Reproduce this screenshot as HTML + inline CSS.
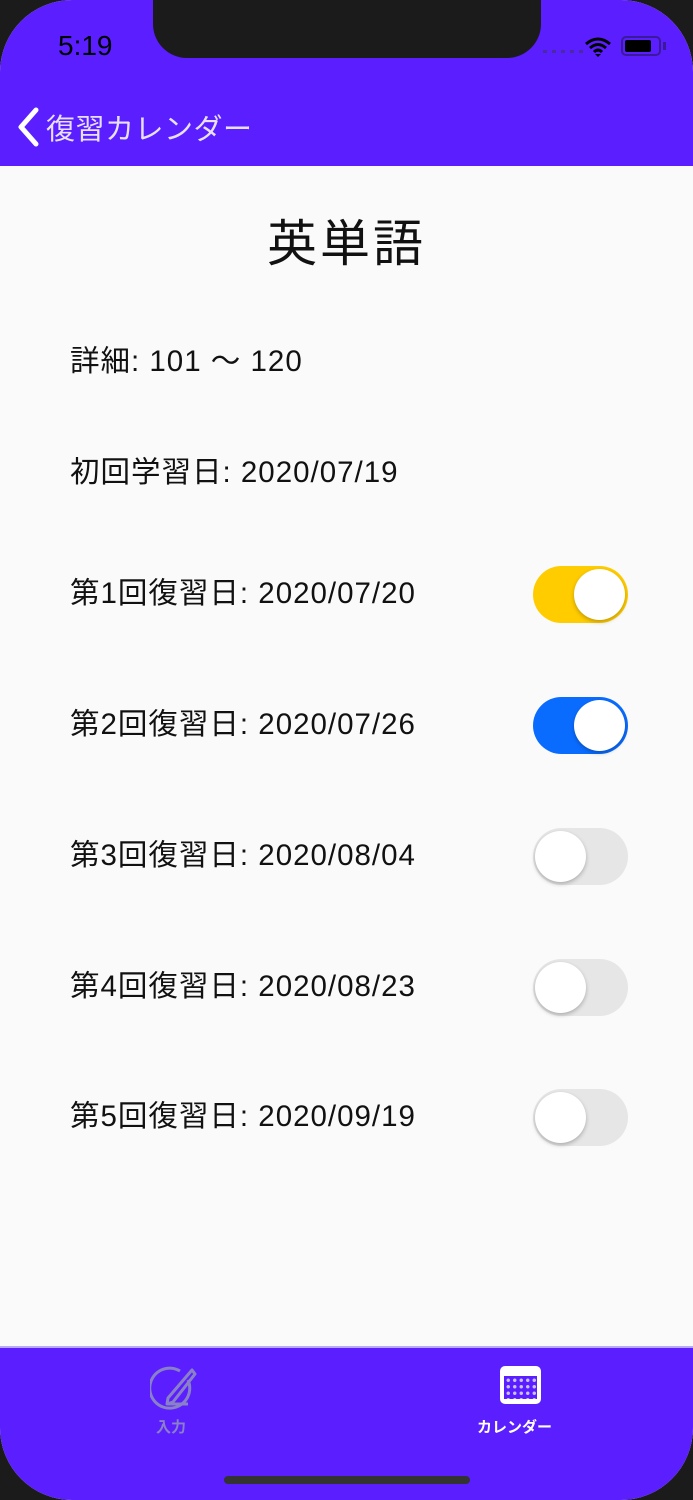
<!DOCTYPE html>
<html><head><meta charset="utf-8"><style>
*{margin:0;padding:0;box-sizing:border-box}
html,body{width:693px;height:1500px;background:#1b1b1b;overflow:hidden;font-family:"Liberation Sans","Noto Sans CJK JP",sans-serif}
.phone{position:absolute;left:0;top:0;width:693px;height:1500px;border-radius:72px;overflow:hidden;background:#fafafa}
.top{position:absolute;left:0;top:0;width:693px;height:166px;background:#5b1eff}
.notch{position:absolute;left:153px;top:0;width:388px;height:58px;background:#1b1b1b;border-radius:0 0 34px 34px}
.time{position:absolute;left:58px;top:30px;font-size:28px;color:#000;font-weight:500}
.back{position:absolute;left:46px;top:106px;font-size:29px;color:#e8e0ff;letter-spacing:0.5px}
.title{position:absolute;left:0;width:693px;top:204px;text-align:center;font-size:50px;color:#111;letter-spacing:3px}
.row{position:absolute;left:70px;font-size:29.5px;color:#111;line-height:36px;letter-spacing:1px}
.tg{position:absolute;left:533px;width:95px;height:57px;border-radius:29px}
.tg .k{position:absolute;top:3px;width:51px;height:51px;border-radius:50%;background:#fff;box-shadow:0 2px 4px rgba(0,0,0,.25)}
.on .k{left:41px}.off{background:#e6e6e6}.off .k{left:2px}
.bar{position:absolute;left:0;top:1346px;width:693px;height:154px;background:#5b1eff;border-top:2px solid #b8a8ff}
.lbl{position:absolute;font-size:15px;font-weight:bold}
.home{position:absolute;left:224px;top:1476px;width:246px;height:8px;border-radius:4px;background:#333}
</style></head><body>
<div class="phone">
<div class="top">
<div class="notch"></div>
<div class="time">5:19</div>
<div style="position:absolute;left:543px;top:50px;width:40px;height:3px;background-image:repeating-linear-gradient(90deg,#4a2aa0 0 4px,transparent 4px 9px)"></div>
<svg style="position:absolute;left:584px;top:36px" width="28" height="22" viewBox="0 0 28 22"><path d="M2 8Q14 -2 26 8M6 12Q14 5 22 12M10 16Q14 12 18 16" stroke="#000" stroke-width="3" fill="none"/><path d="M11 18L14 21L17 18Z" fill="#000"/></svg>
<div style="position:absolute;left:621px;top:36px;width:40px;height:20px;border:2px solid #3a1a9a;border-radius:5px"><div style="position:absolute;left:2px;top:2px;width:26px;height:12px;background:#000;border-radius:2px"></div></div>
<div style="position:absolute;left:663px;top:42px;width:3px;height:8px;background:#3a1a9a"></div>
<svg style="position:absolute;left:14px;top:107px" width="28" height="40" viewBox="0 0 28 40"><path d="M22 3L7 20L22 37" stroke="#fff" stroke-width="5" fill="none" stroke-linecap="round" stroke-linejoin="round"/></svg>
<div class="back">復習カレンダー</div>
</div>
<div class="title">英単語</div>
<div class="row" style="top:344px">詳細: 101 ～ 120</div>
<div class="row" style="top:455px">初回学習日: 2020/07/19</div>
<div class="row" style="top:576px">第1回復習日: 2020/07/20</div>
<div class="row" style="top:707px">第2回復習日: 2020/07/26</div>
<div class="row" style="top:838px">第3回復習日: 2020/08/04</div>
<div class="row" style="top:969px">第4回復習日: 2020/08/23</div>
<div class="row" style="top:1099px">第5回復習日: 2020/09/19</div>
<div class="tg on" style="top:566px;background:#ffcc00"><div class="k"></div></div>
<div class="tg on" style="top:697px;background:#0a6cff"><div class="k"></div></div>
<div class="tg off" style="top:828px"><div class="k"></div></div>
<div class="tg off" style="top:959px"><div class="k"></div></div>
<div class="tg off" style="top:1089px"><div class="k"></div></div>
<div class="bar">
<svg style="position:absolute;left:150px;top:18px" width="48" height="48" viewBox="0 0 48 48"><path d="M38 14A20 20 0 1 1 30 5" stroke="#8a80c8" stroke-width="3" fill="none"/><path d="M42 4L18 32L17 38L23 36L45 8Z" stroke="#8a80c8" stroke-width="3" fill="none" stroke-linejoin="round"/><path d="M17 38L38 38" stroke="#8a80c8" stroke-width="3"/></svg>
<div class="lbl" style="left:156px;top:68px;color:#8a80c8">入力</div>
<div style="position:absolute;left:500px;top:18px;width:41px;height:38px;border-radius:5px;background:#fff;border:3px solid #fff">
<div style="position:absolute;left:1px;top:7px;width:33px;height:23px;background:#5b1eff;background-image:radial-gradient(circle,#c8c0ff 1.5px,transparent 2px);background-size:6.5px 6.5px;background-position:1px 1px"></div></div>
<div class="lbl" style="left:477px;top:68px;color:#fff">カレンダー</div>
</div>
<div class="home"></div>
</div>
</body></html>
